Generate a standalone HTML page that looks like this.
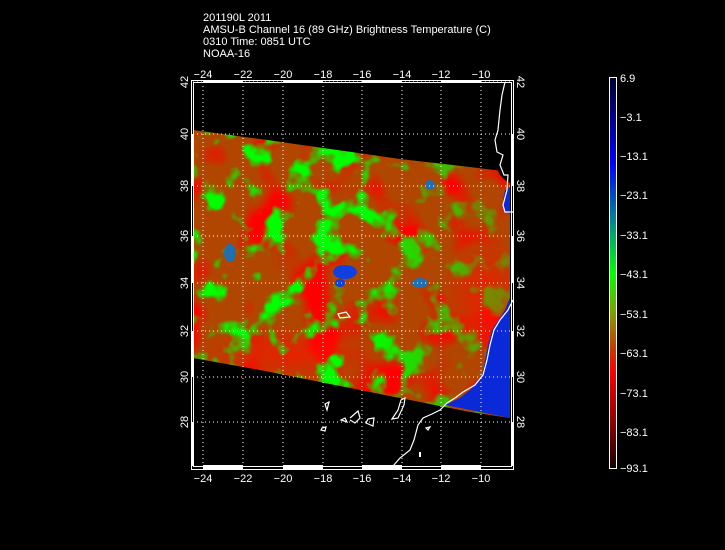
<!DOCTYPE html>
<html><head><meta charset="utf-8"><style>
html,body{margin:0;padding:0;background:#000;width:725px;height:550px;overflow:hidden}
svg{display:block}
text{font-family:"Liberation Sans",sans-serif;fill:#fff;font-size:11px}
</style></head><body>
<svg width="725" height="550" viewBox="0 0 725 550">
<defs>
<clipPath id="sw"><polygon points="193,130 260,139 330,149 400,159 470,167 510,172 510,418 470,412 400,398 330,384 260,370 193,358"/></clipPath>
<filter id="g" x="0" y="0" width="100%" height="100%"><feTurbulence type="fractalNoise" baseFrequency="0.035" numOctaves="3" seed="7"/><feColorMatrix type="matrix" values="0 0 0 0 0  0 0 0 0 1  0 0 0 0 0  6 0 0 0 -3.2"/></filter>
<filter id="r" x="0" y="0" width="100%" height="100%"><feTurbulence type="fractalNoise" baseFrequency="0.02" numOctaves="2" seed="2"/><feColorMatrix type="matrix" values="0 0 0 0 1  0 0 0 0 0  0 0 0 0 0  0 5 0 0 -2.5"/></filter>
<linearGradient id="mg" x1="0" y1="0" x2="1" y2="0"><stop offset="0" stop-color="#fff"/><stop offset="0.55" stop-color="#fff"/><stop offset="1" stop-color="#fff" stop-opacity="0.35"/></linearGradient>
<mask id="m"><rect x="190" y="125" width="325" height="300" fill="url(#mg)"/></mask>
<radialGradient id="rr"><stop offset="0" stop-color="#ff1000" stop-opacity="0.7"/><stop offset="1" stop-color="#ff1000" stop-opacity="0"/></radialGradient>
<linearGradient id="cb" x1="0" y1="0" x2="0" y2="1">
<stop offset="0" stop-color="#000030"/><stop offset="0.1" stop-color="#00008a"/><stop offset="0.22" stop-color="#0000ff"/><stop offset="0.35" stop-color="#0078a0"/><stop offset="0.5" stop-color="#00ff00"/><stop offset="0.6" stop-color="#80a000"/><stop offset="0.7" stop-color="#d03000"/><stop offset="0.75" stop-color="#ff0000"/><stop offset="0.88" stop-color="#900000"/><stop offset="1" stop-color="#100000"/>
</linearGradient>
</defs>
<text x="203" y="21">201190L 2011</text>
<text x="203" y="33">AMSU-B Channel 16 (89 GHz) Brightness Temperature (C)</text>
<text x="203" y="45">0310 Time: 0851 UTC</text>
<text x="203" y="57">NOAA-16</text>
<g clip-path="url(#sw)">
<rect x="190" y="125" width="325" height="300" fill="#b04600"/>
<rect x="190" y="125" width="325" height="300" filter="url(#r)"/>
<ellipse cx="485" cy="295" rx="45" ry="70" fill="url(#rr)"/>
<ellipse cx="290" cy="355" rx="100" ry="30" fill="url(#rr)"/>
<rect x="190" y="125" width="325" height="300" filter="url(#g)" mask="url(#m)"/>
<ellipse cx="345" cy="272" rx="12" ry="7" fill="#1040e0"/>
<ellipse cx="340" cy="283" rx="5" ry="4" fill="#1040e0"/>
<ellipse cx="420" cy="283" rx="8" ry="5" fill="#2070b0"/>
<ellipse cx="230" cy="253" rx="6" ry="9" fill="#2070b0"/>
<ellipse cx="430" cy="185" rx="5" ry="5" fill="#2070b0"/>
<polygon points="513,290 505,310 492,330 488,345 482,375 470,390 460,398 445,405 510,418 513,418" fill="#0a2ad8"/>
<polygon points="513,185 505,190 503,200 505,212 513,215" fill="#0a2ad8"/>
<polygon points="495,165 513,165 513,185 505,180 500,175" fill="#000"/>
</g>
<g stroke="#fff" stroke-width="1" stroke-dasharray="1,3" fill="none">
<path d="M203,82V466M243,82V466M283,82V466M323,82V466M362,82V466M402,82V466M441,82V466M481,82V466"/>
<path d="M193,82H513M193,134H513M193,186H513M193,236H513M193,283H513M193,331H513M193,377H513M193,422H513"/>
</g>
<g fill="none" stroke="#fff" stroke-width="1.2">
<path d="M505,82 L502,95 L500,110 L498,130 L495,140 L497,152 L503,155 L500,165 L504,175 L508,175 L507,190 L503,205 L505,212 L513,212"/>
<path d="M513,300 L508,310 L500,320 L494,330 L490,345 L487,360 L483,375 L475,385 L463,392 L455,398 L447,403 L440,410 L432,414 L423,418 L418,425 L414,440 L410,450 L400,458 L393,466"/>
<path d="M338,314 L346,312 L350,317 L340,318Z"/>
<path d="M325,404 L329,402 L327,410Z M341,420 L345,418 L347,422Z M350,418 L358,411 L360,418 L355,423 L350,420 M368,419 L374,418 L373,426 L366,423Z M392,419 L398,410 L401,400 L405,398 L404,405 L398,418Z M322,428 L326,427 L325,431 L321,430Z M426,428 L430,427 L428,430Z"/>
</g>
<path d="M420,452V457" stroke="#fff" stroke-width="2"/>
<rect x="191.5" y="80.5" width="322" height="389" fill="none" stroke="#fff"/>
<rect x="193.5" y="82.5" width="318" height="384" fill="none" stroke="#fff"/>
<g fill="#fff">
<rect x="203" y="465" width="40" height="4"/><rect x="283" y="465" width="40" height="4"/><rect x="362" y="465" width="40" height="4"/><rect x="441" y="465" width="40" height="4"/>
<rect x="203" y="80" width="40" height="3"/><rect x="283" y="80" width="40" height="3"/><rect x="362" y="80" width="40" height="3"/><rect x="441" y="80" width="40" height="3"/>
<rect x="191" y="134" width="3" height="52"/><rect x="191" y="236" width="3" height="47"/><rect x="191" y="331" width="3" height="46"/><rect x="191" y="422" width="3" height="44"/>
<rect x="511" y="134" width="3" height="52"/><rect x="511" y="236" width="3" height="47"/><rect x="511" y="331" width="3" height="46"/><rect x="511" y="422" width="3" height="44"/>
</g>
<g text-anchor="middle">
<text x="203" y="78">−24</text><text x="243" y="78">−22</text><text x="283" y="78">−20</text><text x="323" y="78">−18</text><text x="362" y="78">−16</text><text x="402" y="78">−14</text><text x="441" y="78">−12</text><text x="481" y="78">−10</text>
<text x="203" y="482">−24</text><text x="243" y="482">−22</text><text x="283" y="482">−20</text><text x="323" y="482">−18</text><text x="362" y="482">−16</text><text x="402" y="482">−14</text><text x="441" y="482">−12</text><text x="481" y="482">−10</text>
</g>
<g text-anchor="middle">
<text transform="translate(188,82) rotate(-90)">42</text><text transform="translate(188,134) rotate(-90)">40</text><text transform="translate(188,186) rotate(-90)">38</text><text transform="translate(188,236) rotate(-90)">36</text><text transform="translate(188,283) rotate(-90)">34</text><text transform="translate(188,331) rotate(-90)">32</text><text transform="translate(188,377) rotate(-90)">30</text><text transform="translate(188,422) rotate(-90)">28</text>
<text transform="translate(517,82) rotate(90)">42</text><text transform="translate(517,134) rotate(90)">40</text><text transform="translate(517,186) rotate(90)">38</text><text transform="translate(517,236) rotate(90)">36</text><text transform="translate(517,283) rotate(90)">34</text><text transform="translate(517,331) rotate(90)">32</text><text transform="translate(517,377) rotate(90)">30</text><text transform="translate(517,422) rotate(90)">28</text>
</g>
<rect x="609.5" y="77.5" width="7" height="391" fill="url(#cb)" stroke="#fff"/>
<g>
<text x="620" y="82">6.9</text><text x="620" y="121">−3.1</text><text x="620" y="160">−13.1</text><text x="620" y="199">−23.1</text><text x="620" y="239">−33.1</text><text x="620" y="278">−43.1</text><text x="620" y="318">−53.1</text><text x="620" y="357">−63.1</text><text x="620" y="397">−73.1</text><text x="620" y="436">−83.1</text><text x="620" y="472">−93.1</text>
</g>
</svg>
</body></html>
